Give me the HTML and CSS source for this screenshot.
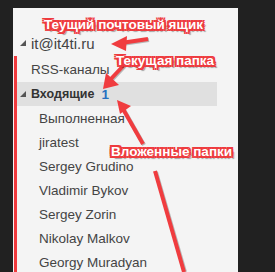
FILE: index.html
```html
<!DOCTYPE html>
<html>
<head>
  <title>Folders</title>
  <link rel="stylesheet" href="styles.css">
</head>
<body>
  <div class="pane">
    <div class="account">
      <svg class="caret" width="6" height="6" viewBox="0 0 6 6"><polygon points="6,0 6,6 0,6"/></svg>
      <span>it@it4ti.ru</span>
    </div>

    <div class="folders">
      <div class="row rss">RSS-каналы</div>
      <div class="row inbox">
        <svg class="caret" width="6" height="6" viewBox="0 0 6 6"><polygon points="6,0 6,6 0,6"/></svg>
        <b>Входящие</b>
        <span class="count">1</span>
      </div>
      <div class="row sub">Выполненная</div>
      <div class="row sub">jiratest</div>
      <div class="row sub">Sergey Grudino</div>
      <div class="row sub">Vladimir Bykov</div>
      <div class="row sub">Sergey Zorin</div>
      <div class="row sub">Nikolay Malkov</div>
      <div class="row sub">Georgy Muradyan</div>
    </div>
  </div>

  <!-- annotations drawn over the screenshot -->
  <svg class="arrows" width="275" height="272" viewBox="0 0 275 272">
    <g class="shadow">
      <line x1="149" y1="40" x2="122" y2="44"/>
      <line x1="125" y1="66" x2="110" y2="82"/>
      <line x1="144" y1="145" x2="124" y2="110"/>
      <line x1="156" y1="172" x2="185" y2="272"/>
    </g>
    <g class="arrow">
      <line x1="148" y1="39" x2="121" y2="43"/>
      <polygon points="111,44 127,36 126,51"/>
      <line x1="124" y1="65" x2="109" y2="81"/>
      <polygon points="103,89 106,73 119,85"/>
      <line x1="143" y1="144" x2="123" y2="109"/>
      <polygon points="117,100 131,106 120,114"/>
      <line x1="155" y1="171" x2="184" y2="272"/>
    </g>
  </svg>

  <span class="note note-box">Теущий почтовый ящик</span>
  <span class="note note-folder">Текущая папка</span>
  <span class="note note-sub">Вложенные папки</span>
</body>
</html>
```

FILE: styles.css
```css
body {
  margin: 0;
  padding: 8px 0 0 13px;
  background-color: #212121;
  font-family: "Liberation Sans", Arial, sans-serif;
  height: 264px;
  overflow: hidden;
}

.pane {
  width: 225px;
  height: 264px;
  background-color: #f4f4f4;
  padding-top: 22px;
  box-sizing: border-box;
  color: #444;
}

.account {
  height: 26px;
  display: flex;
  align-items: center;
  padding-left: 7px;
  font-size: 15px;
}

.caret {
  fill: #555;
  margin-right: 5px;
  flex: none;
}

.folders {
  margin-left: 1px;
  margin-right: 21px;
  border-left: 3px solid #f03a3d;
  font-size: 13.5px;
}

.row {
  height: 24px;
  display: flex;
  align-items: center;
  white-space: nowrap;
}

.rss {
  height: 26px;
  padding-left: 14px;
}

.inbox {
  background-color: #e0e0e0;
  padding-left: 3px;
}

.inbox b {
  font-size: 12.5px;
  color: #333;
}

.count {
  color: #2770c0;
  font-weight: bold;
  margin-left: 7px;
}

.sub {
  padding-left: 22px;
}

.arrows {
  position: absolute;
  left: 0;
  top: 0;
}

.arrow line {
  stroke: #f03c3f;
  stroke-width: 4;
}

.arrow polygon {
  fill: #f03c3f;
}

.shadow line {
  stroke: rgba(0, 0, 0, 0.25);
  stroke-width: 4;
}

.note {
  position: absolute;
  font-family: "Liberation Sans", Arial, sans-serif;
  font-weight: bold;
  font-size: 13.5px;
  line-height: 14px;
  color: #fff;
  white-space: nowrap;
  text-shadow:
    2px 0 0 #ee3a3d, -2px 0 0 #ee3a3d, 0 2px 0 #ee3a3d, 0 -2px 0 #ee3a3d,
    2px 2px 0 #ee3a3d, -2px -2px 0 #ee3a3d, 2px -2px 0 #ee3a3d, -2px 2px 0 #ee3a3d,
    3px 3px 1px rgba(0, 0, 0, 0.35);
}

.note-box {
  left: 44px;
  top: 18px;
}

.note-folder {
  left: 116px;
  top: 54px;
}

.note-sub {
  left: 111px;
  top: 145px;
}
```
